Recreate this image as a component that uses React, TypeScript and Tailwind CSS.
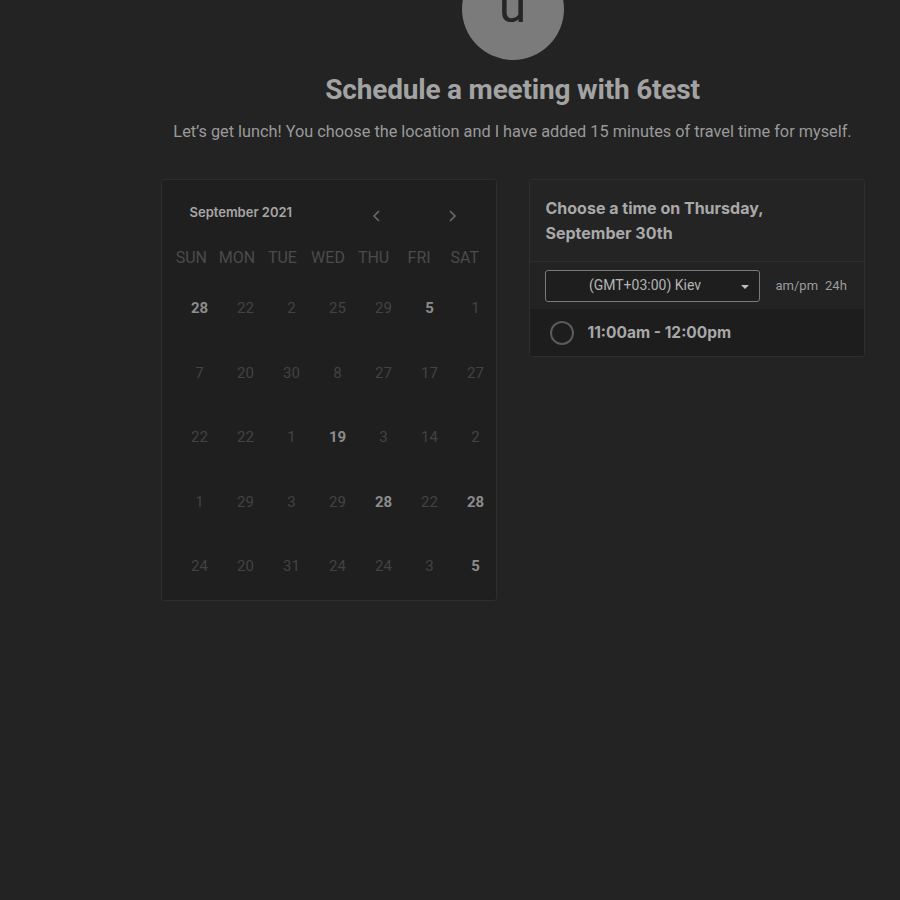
import React from 'react';

const weekdays = ['SUN', 'MON', 'TUE', 'WED', 'THU', 'FRI', 'SAT'];

// [day, available]
const weeks: [number, boolean][][] = [
    [[28, true], [22, false], [2, false], [25, false], [29, false], [5, true], [1, false]],
    [[7, false], [20, false], [30, false], [8, false], [27, false], [17, false], [27, false]],
    [[22, false], [22, false], [1, false], [19, true], [3, false], [14, false], [2, false]],
    [[1, false], [29, false], [3, false], [29, false], [28, true], [22, false], [28, true]],
    [[24, false], [20, false], [31, false], [24, false], [24, false], [3, false], [5, true]],
];

const App: React.FC = () => {
    return (
        <div className="min-h-screen w-full overflow-hidden bg-[#232323] font-['Roboto',sans-serif]">
            <div className="w-[1025px] flex flex-col items-center">
                <div className="-mt-[42px] w-[102px] h-[102px] rounded-full bg-[#7b7b7b] flex items-center justify-center">
                    <span className="text-[50px] leading-none text-[#262626] -mt-[8px]">u</span>
                </div>

                <h1 className="mt-[9px] text-[28px] leading-[42px] font-bold text-[#a3a3a3] tracking-[-0.2px]">
                    Schedule a meeting with 6test
                </h1>
                <p className="mt-[9px] text-[16.3px] leading-[24px] text-[#9a9a9a]">
                    Let’s get lunch! You choose the location and I have added 15 minutes of travel time for myself.
                </p>

                <div className="mt-[35px] flex items-start gap-[32px]">
                    {/* calendar */}
                    <div className="w-[336px] h-[422px] bg-[#1f1f1f] border border-[#2e2e2e] rounded-[3px]">
                        <div className="flex items-center h-[64px] pt-[2px]">
                            <span className="ml-[28px] font-['Inter',sans-serif] text-[13px] font-semibold text-[#a6a6a6]">September 2021</span>
                            <button className="ml-[79px] mt-[6px] text-[#6b6b6b]">
                                <svg width="12" height="14" viewBox="0 0 12 14" fill="none" stroke="currentColor" strokeWidth="1.6">
                                    <path d="M8 2 L3 7 L8 12" />
                                </svg>
                            </button>
                            <button className="ml-[63px] mt-[6px] text-[#6b6b6b]">
                                <svg width="12" height="14" viewBox="0 0 12 14" fill="none" stroke="currentColor" strokeWidth="1.6">
                                    <path d="M4 2 L9 7 L4 12" />
                                </svg>
                            </button>
                        </div>
                        <div className="ml-[7px] grid grid-cols-7 w-[319px]">
                            {weekdays.map((d) => (
                                <div key={d} className="h-[28px] flex items-center justify-center text-[16px] text-[#4b4b4b]">
                                    {d}
                                </div>
                            ))}
                        </div>
                        <div className="ml-[15px] mt-[4px] grid grid-cols-7 w-[322px]">
                            {weeks.flat().map(([n, on], i) => (
                                <div
                                    key={i}
                                    className={`h-[64.5px] flex items-center justify-center text-[15px] ${on ? 'font-bold text-[#8c8c8c]' : 'text-[#434343]'}`}
                                >
                                    {n}
                                </div>
                            ))}
                        </div>
                    </div>

                    {/* time picker */}
                    <div className="w-[336px] bg-[#1f1f1f] border border-[#2e2e2e] rounded-[3px] overflow-hidden">
                        <div className="bg-[#242424] border-b border-[#2c2c2c] px-[16px] pt-[16px] pb-[15px]">
                            <h2 className="font-['Inter',sans-serif] text-[16px] font-bold leading-[25px] text-[#a9a9a9]">
                                Choose a time on Thursday,
                                <br />
                                September 30th
                            </h2>
                        </div>
                        <div className="bg-[#232323] flex items-center h-[47px] px-[15px]">
                            <div className="relative w-[215px] h-[32px] border border-[#7a7a7a] rounded-[3px] bg-[#1e1e1e] flex items-center justify-center">
                                <span className="text-[14px] text-[#b4b4b4] -ml-[14px]">(GMT+03:00) Kiev</span>
                                <span className="absolute right-[10px] top-[14px] w-0 h-0 border-l-[4px] border-r-[4px] border-t-[4px] border-l-transparent border-r-transparent border-t-[#bdbdbd]" />
                            </div>
                            <span className="ml-[16px] text-[13px] text-[#9c9c9c]">am/pm</span>
                            <span className="ml-[7px] text-[13px] text-[#9c9c9c]">24h</span>
                        </div>
                        <div className="bg-[#1d1d1d] h-[47px] flex items-center px-[20px]">
                            <span className="w-[24px] h-[24px] rounded-full border-2 border-[#5a5a5a]" />
                            <span className="ml-[14px] font-['Inter',sans-serif] text-[15.5px] font-bold text-[#a8a8a8]">11:00am - 12:00pm</span>
                        </div>
                    </div>
                </div>
            </div>
        </div>
    );
};

export default App;
